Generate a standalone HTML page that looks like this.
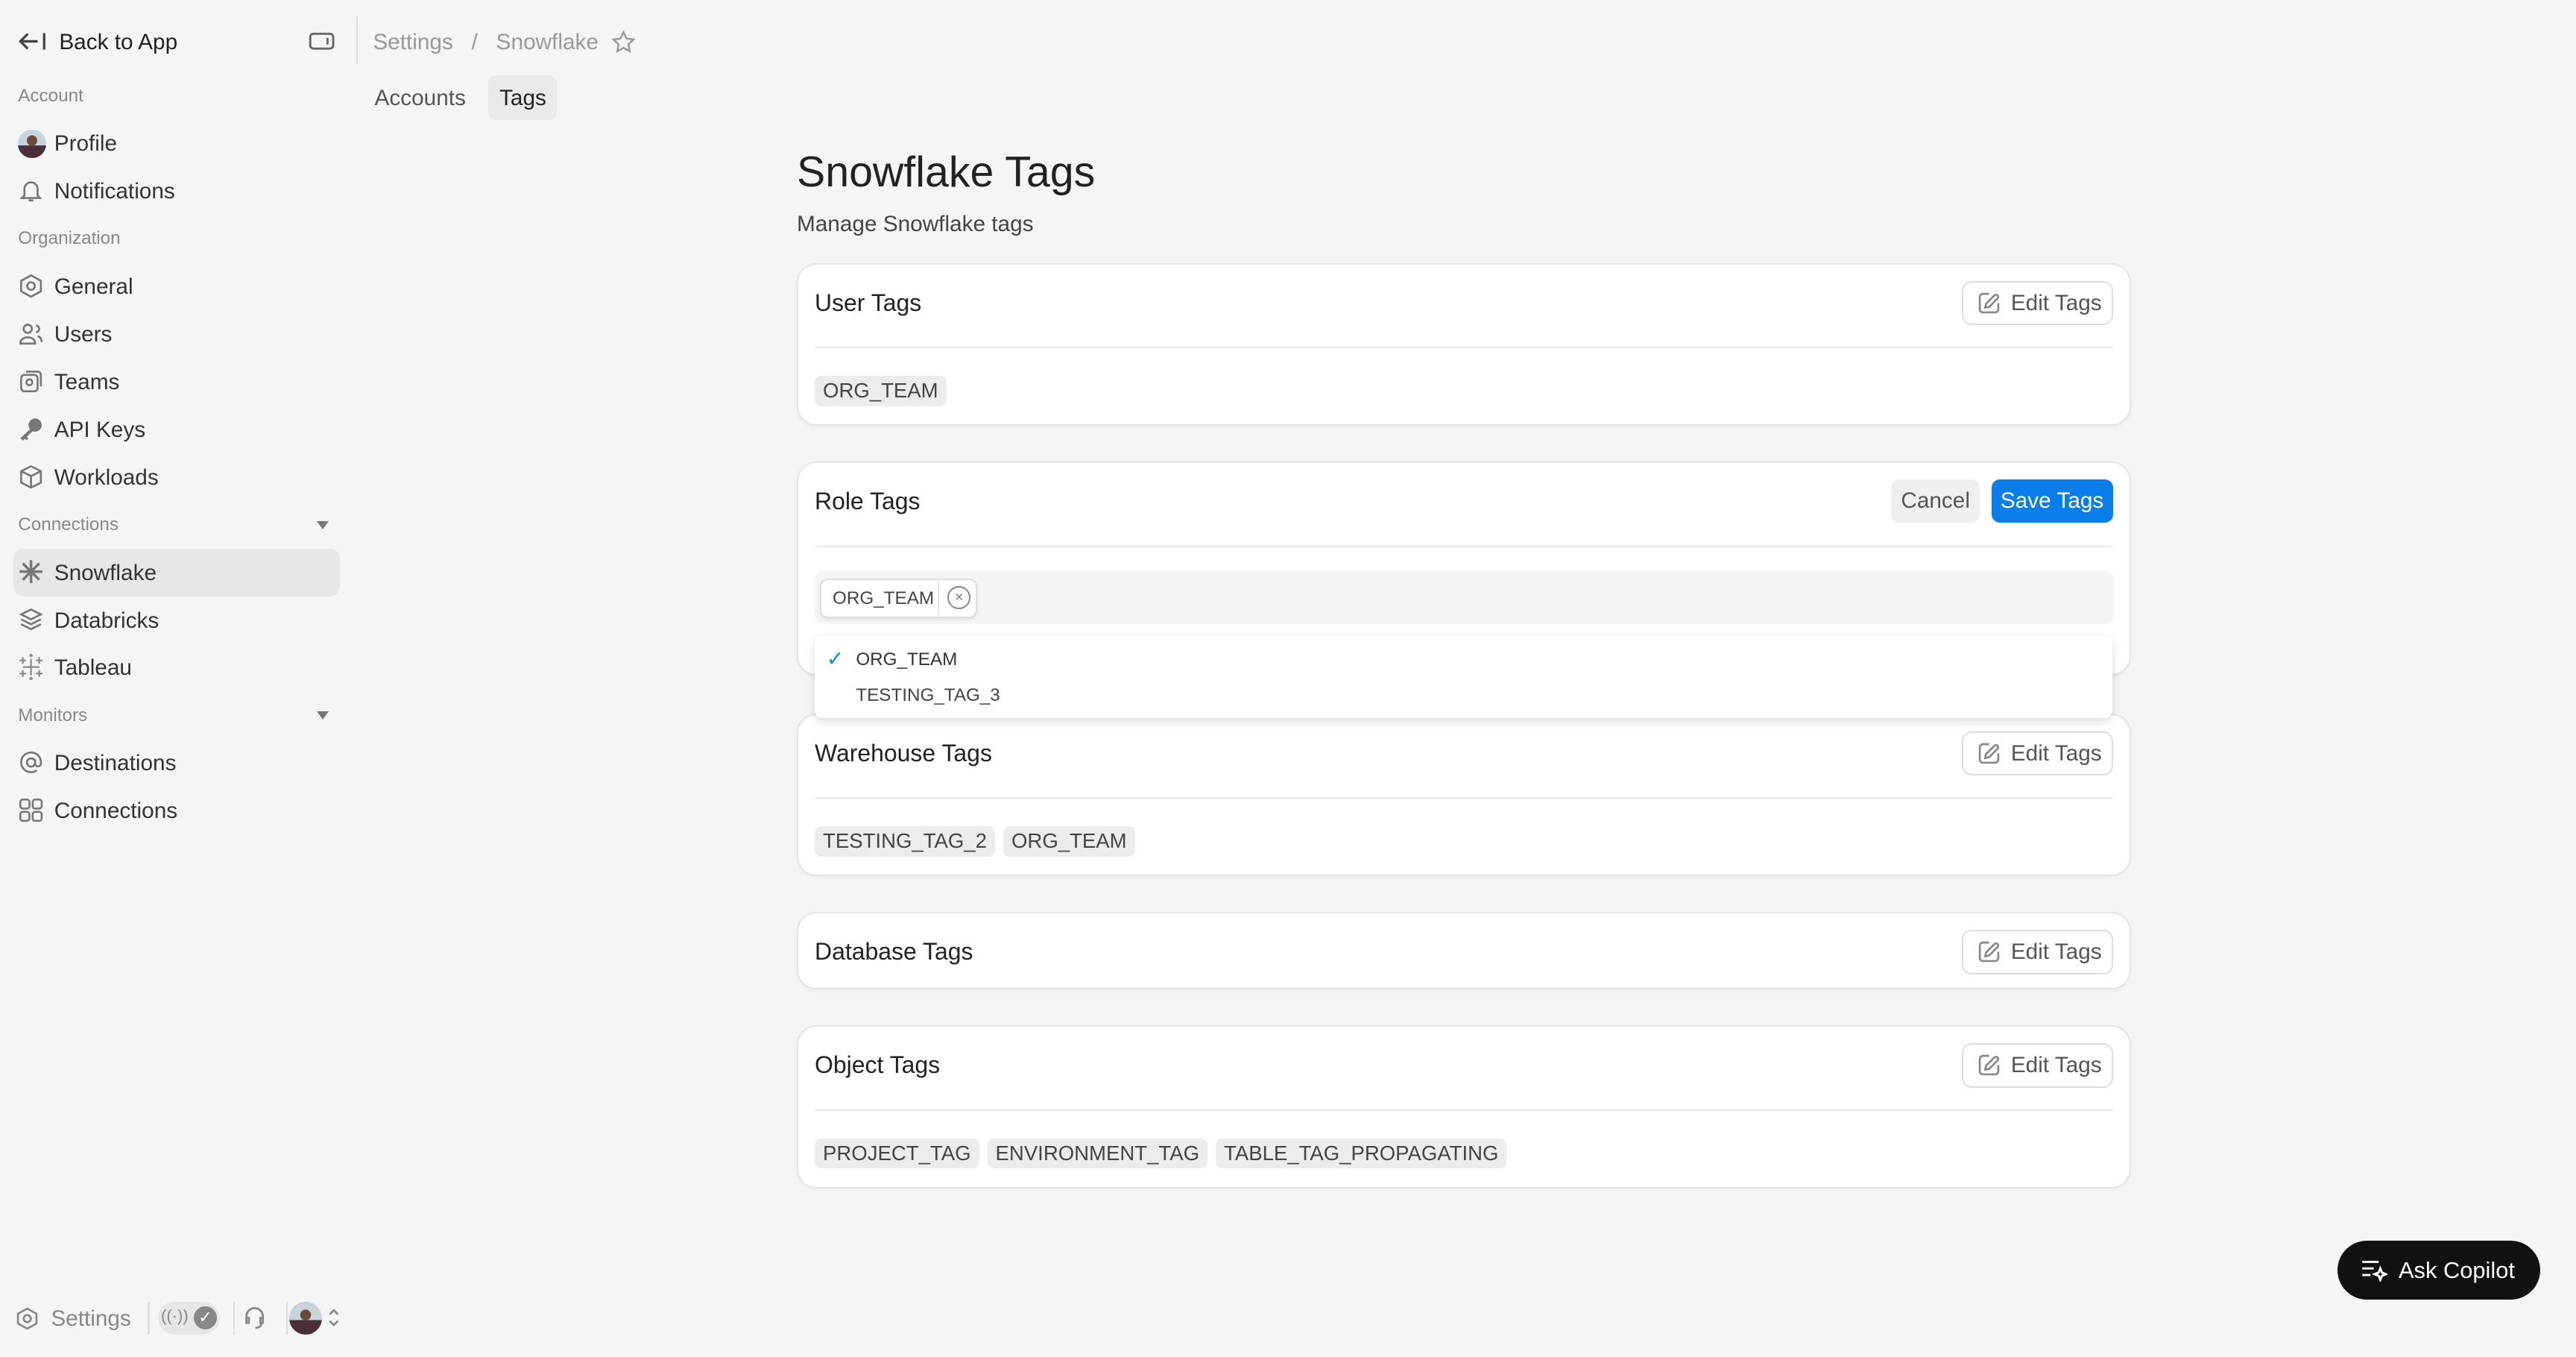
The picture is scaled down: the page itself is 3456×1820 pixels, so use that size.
<!DOCTYPE html>
<html><head><meta charset="utf-8"><style>
*{box-sizing:border-box;margin:0;padding:0}
html,body{width:3456px;height:1820px;overflow:hidden;background:#f4f5f7}
#r{zoom:2.2041;position:relative;width:1568px;height:826px;font-family:"Liberation Sans",sans-serif;color:#222;}
.a{position:absolute;white-space:nowrap}
.nav{font-size:13.5px;color:#333;left:33px}
.sec{font-size:11px;color:#888;left:11px}
.ic{position:absolute;left:11px;width:16px;height:16px}
.card{position:absolute;left:485px;width:812px;background:#fff;border:1px solid #e3e4e8;border-radius:12px;box-shadow:0 1px 2px rgba(0,0,0,.04)}
.card .t{position:absolute;left:10px;top:15px;font-size:14.5px;color:#222}
.card .ln{position:absolute;left:10px;right:10px;top:50px;border-top:1px solid #e5e5ea}
.eb{position:absolute;right:10px;top:10px;height:27px;width:92px;border:1px solid #ddd;border-radius:6px;background:#fff;font-size:13.5px;color:#555;padding:5px 0 0 29px}
.eb svg{position:absolute;left:8px;top:5px}
.chip{display:inline-block;background:#ececec;border-radius:4px;font-size:12.5px;color:#444;padding:2px 5px;margin-right:5px}
.chips{position:absolute;left:10px;top:67px}
</style></head><body><div id="r">
<svg class="a" style="left:11px;top:18px" width="18" height="14" viewBox="0 0 18 14" fill="none" stroke="#444" stroke-width="1.5"><path d="M12 7H2M6 2.5L1.5 7 6 11.5M16 2v10"/></svg>
<div class="a" style="left:36px;top:18px;font-size:13.5px;color:#222">Back to App</div>
<svg class="a" style="left:188px;top:19px" width="16" height="12" viewBox="0 0 16 12" fill="none" stroke="#666" stroke-width="1.3"><rect x="1" y="1.5" width="14" height="9" rx="2"/><path d="M11.5 4v4"/></svg>
<div class="a" style="left:217px;top:10px;width:1px;height:29px;background:#ddd"></div>
<div class="a sec" style="top:52px">Account</div>
<div class="a" style="left:11px;top:79px;width:17px;height:17px;border-radius:50%;background:radial-gradient(circle at 50% 38%,#6b4a3a 0 22%,transparent 24%),linear-gradient(#c9d3dc 55%,#4a2f3a 56%)"></div>
<div class="a nav" style="top:80px">Profile</div>
<svg class="ic" style="top:108px" viewBox="0 0 16 16" fill="none" stroke="#777" stroke-width="1.2"><path d="M4 11V7a4 4 0 018 0v4l1.5 1.5h-11zM6.5 14h3"/></svg>
<div class="a nav" style="top:109px">Notifications</div>
<div class="a sec" style="top:139px">Organization</div>
<svg class="ic" style="top:166px" viewBox="0 0 16 16" fill="none" stroke="#777" stroke-width="1.2"><path d="M8 1.5l6 3.3v6.4l-6 3.3-6-3.3V4.8z"/><circle cx="8" cy="8" r="2.3"/></svg>
<div class="a nav" style="top:167px">General</div>
<svg class="ic" style="top:195px" viewBox="0 0 16 16" fill="none" stroke="#777" stroke-width="1.2"><circle cx="6" cy="5" r="2.5"/><path d="M1.5 14c0-2.5 2-3.8 4.5-3.8s4.5 1.3 4.5 3.8zM11 3a2 2 0 010 4M12 9.5c1.5.3 2.5 1.5 2.5 3.5"/></svg>
<div class="a nav" style="top:196px">Users</div>
<svg class="ic" style="top:224px" viewBox="0 0 16 16" fill="none" stroke="#777" stroke-width="1.2"><rect x="2" y="4" width="10" height="10" rx="2"/><path d="M5 2h7a2 2 0 012 2v7"/><circle cx="7" cy="8.5" r="1.8"/></svg>
<div class="a nav" style="top:225px">Teams</div>
<svg class="ic" style="top:253px" viewBox="0 0 16 16" fill="#777"><circle cx="10.5" cy="5.5" r="4"/><path d="M8 7.5L1.5 13.5l1.5 1.5 1.2-1.2 1 1 1.2-1.2-1-1 3.8-3.6z"/></svg>
<div class="a nav" style="top:254px">API Keys</div>
<svg class="ic" style="top:282px" viewBox="0 0 16 16" fill="none" stroke="#777" stroke-width="1.2"><path d="M8 1.5l6 3v7l-6 3-6-3v-7zM2 4.5l6 3 6-3M8 7.5v7"/></svg>
<div class="a nav" style="top:283px">Workloads</div>
<div class="a sec" style="top:313px">Connections</div>
<div class="a" style="left:193px;top:317px;border:4px solid transparent;border-top:5px solid #777"></div>
<div class="a" style="left:8px;top:334px;width:199px;height:29px;border-radius:6px;background:#e6e7e9"></div>
<svg class="ic" style="top:340px" viewBox="0 0 16 16" fill="none" stroke="#777" stroke-width="1.6"><path d="M8 1v14M1 8h14M3 3l10 10M13 3L3 13"/></svg>
<div class="a nav" style="top:341px">Snowflake</div>
<svg class="ic" style="top:369px" viewBox="0 0 16 16" fill="none" stroke="#777" stroke-width="1.2"><path d="M8 2l6 3-6 3-6-3zM2 8l6 3 6-3M2 11l6 3 6-3"/></svg>
<div class="a nav" style="top:370px">Databricks</div>
<svg class="ic" style="top:398px" viewBox="0 0 16 16" fill="none" stroke="#888" stroke-width="1"><path d="M8 3v10M3 8h10M3 2v4M1 4h4M13 2v4M11 4h4M3 10v4M1 12h4M13 10v4M11 12h4M8 0v2M7 1h2M8 14v2M7 15h2"/></svg>
<div class="a nav" style="top:399px">Tableau</div>
<div class="a sec" style="top:429px">Monitors</div>
<div class="a" style="left:193px;top:433px;border:4px solid transparent;border-top:5px solid #777"></div>
<svg class="ic" style="top:456px" viewBox="0 0 16 16" fill="none" stroke="#777" stroke-width="1.2"><circle cx="8" cy="8" r="2.5"/><path d="M10.5 6v3a1.8 1.8 0 003.5 0V8a6 6 0 10-2.5 4.8"/></svg>
<div class="a nav" style="top:457px">Destinations</div>
<svg class="ic" style="top:485px" viewBox="0 0 16 16" fill="none" stroke="#777" stroke-width="1.2"><rect x="1.5" y="1.5" width="5.5" height="5.5" rx="1.5"/><rect x="9" y="1.5" width="5.5" height="5.5" rx="1.5"/><rect x="1.5" y="9" width="5.5" height="5.5" rx="1.5"/><rect x="9" y="9" width="5.5" height="5.5" rx="1.5"/></svg>
<div class="a nav" style="top:486px">Connections</div>
<svg class="a" style="left:9px;top:795px" width="15" height="15" viewBox="0 0 16 16" fill="none" stroke="#888" stroke-width="1.3"><path d="M8 1.5l6 3.3v6.4l-6 3.3-6-3.3V4.8z"/><circle cx="8" cy="8" r="2.3"/></svg>
<div class="a" style="left:31px;top:795px;font-size:13.5px;color:#888">Settings</div>
<div class="a" style="left:90px;top:792px;width:1px;height:20px;background:#ddd"></div>
<div class="a" style="left:96px;top:792px;width:38px;height:20px;border-radius:10px;background:#e6e6e8"></div>
<div class="a" style="left:98px;top:795px;font-size:10px;color:#888">((·))</div>
<div class="a" style="left:118px;top:795px;width:14px;height:14px;border-radius:50%;background:#888;color:#fff;font-size:10px;text-align:center;line-height:14px">✓</div>
<div class="a" style="left:142px;top:792px;width:1px;height:20px;background:#ddd"></div>
<svg class="a" style="left:147px;top:794px" width="16" height="16" viewBox="0 0 16 16" fill="none" stroke="#888" stroke-width="1.3"><path d="M3 9V7a5 5 0 0110 0v2M3 8h1.5v3H3zM11.5 8H13v3h-1.5zM12 11.5c0 2-2 2.5-3.5 2.5"/></svg>
<div class="a" style="left:174px;top:792px;width:1px;height:20px;background:#ddd"></div>
<div class="a" style="left:176px;top:792px;width:20px;height:20px;border-radius:50%;background:radial-gradient(circle at 50% 40%,#6b4a3a 0 20%,transparent 22%),linear-gradient(#c9d3dc 55%,#4a2f3a 56%)"></div>
<svg class="a" style="left:199px;top:796px" width="8" height="12" viewBox="0 0 8 12" fill="none" stroke="#888" stroke-width="1.2"><path d="M1.5 4L4 1.5 6.5 4M1.5 8L4 10.5 6.5 8"/></svg>
<div class="a" style="left:227px;top:18px;font-size:13.5px;color:#999">Settings &nbsp;&nbsp;/&nbsp;&nbsp; Snowflake</div>
<svg class="a" style="left:372px;top:18px" width="15" height="15" viewBox="0 0 16 16" fill="none" stroke="#999" stroke-width="1.2"><path d="M8 1.5l2 4.2 4.5.6-3.3 3.1.8 4.5L8 11.7l-4 2.2.8-4.5L1.5 6.3 6 5.7z"/></svg>
<div class="a" style="left:228px;top:52px;font-size:13.5px;color:#555">Accounts</div>
<div class="a" style="left:297px;top:46px;width:42px;height:27px;border-radius:5px;background:#e9eaec"></div>
<div class="a" style="left:304px;top:52px;font-size:13.5px;color:#222">Tags</div>
<div class="a" style="left:485px;top:90px;font-size:26px;color:#222">Snowflake Tags</div>
<div class="a" style="left:485px;top:129px;font-size:13.5px;color:#444">Manage Snowflake tags</div>
<div class="card" style="top:160px;height:99px"><div class="t">User Tags</div>
<div class="eb"><svg width="15" height="15" viewBox="0 0 16 16" fill="none" stroke="#888" stroke-width="1.3"><path d="M8 2H4a2 2 0 00-2 2v8a2 2 0 002 2h8a2 2 0 002-2V8M13 2.5l.5.5a1.4 1.4 0 010 2L8 10.5 5.5 11l.5-2.5 5.5-5.5a1.4 1.4 0 012 0z"/></svg>Edit Tags</div>
<div class="ln"></div><div class="chips"><span class="chip">ORG_TEAM</span></div></div>
<div class="card" style="top:281px;height:130px"><div class="t">Role Tags</div>
<div class="a" style="right:91px;top:10px;height:26px;width:54px;border-radius:5px;background:#efefef;font-size:13.5px;color:#555;text-align:center;line-height:26px">Cancel</div>
<div class="a" style="right:10px;top:10px;height:26px;width:74px;border-radius:5px;background:#0a7ee8;font-size:13.5px;color:#fff;text-align:center;line-height:26px">Save Tags</div>
<div class="ln"></div>
<div class="a" style="left:10px;top:65px;width:791px;height:33px;border-radius:6px;background:#f4f4f4"></div>
<div class="a" style="left:13px;top:70px;width:96px;height:24px;border-radius:5px;background:#fff;border:1px solid #ddd;box-shadow:0 1px 2px rgba(0,0,0,.08)"><span class="a" style="left:7px;top:5px;font-size:11px;color:#444">ORG_TEAM</span><span class="a" style="left:71px;top:0;width:1px;height:22px;background:#e5e5e5"></span><span class="a" style="left:77px;top:4px;width:14px;height:14px;border:1px solid #888;border-radius:50%;font-size:9px;color:#777;text-align:center;line-height:12px">×</span></div>
</div>
<div class="card" style="top:434px;height:99px"><div class="t">Warehouse Tags</div>
<div class="eb"><svg width="15" height="15" viewBox="0 0 16 16" fill="none" stroke="#888" stroke-width="1.3"><path d="M8 2H4a2 2 0 00-2 2v8a2 2 0 002 2h8a2 2 0 002-2V8M13 2.5l.5.5a1.4 1.4 0 010 2L8 10.5 5.5 11l.5-2.5 5.5-5.5a1.4 1.4 0 012 0z"/></svg>Edit Tags</div>
<div class="ln"></div><div class="chips"><span class="chip">TESTING_TAG_2</span><span class="chip">ORG_TEAM</span></div></div>
<div class="a" style="left:496px;top:387px;width:790px;height:50px;background:#fff;border-radius:5px;box-shadow:0 2px 6px rgba(0,0,0,.14);z-index:5">
<div class="a" style="left:7px;top:6px;font-size:13px;color:#0a8ee8">✓</div>
<div class="a" style="left:25px;top:8px;font-size:11px;color:#333">ORG_TEAM</div>
<div class="a" style="left:25px;top:30px;font-size:11px;color:#444">TESTING_TAG_3</div></div>
<div class="card" style="top:555px;height:47px"><div class="t">Database Tags</div>
<div class="eb"><svg width="15" height="15" viewBox="0 0 16 16" fill="none" stroke="#888" stroke-width="1.3"><path d="M8 2H4a2 2 0 00-2 2v8a2 2 0 002 2h8a2 2 0 002-2V8M13 2.5l.5.5a1.4 1.4 0 010 2L8 10.5 5.5 11l.5-2.5 5.5-5.5a1.4 1.4 0 012 0z"/></svg>Edit Tags</div></div>
<div class="card" style="top:624px;height:99px"><div class="t">Object Tags</div>
<div class="eb"><svg width="15" height="15" viewBox="0 0 16 16" fill="none" stroke="#888" stroke-width="1.3"><path d="M8 2H4a2 2 0 00-2 2v8a2 2 0 002 2h8a2 2 0 002-2V8M13 2.5l.5.5a1.4 1.4 0 010 2L8 10.5 5.5 11l.5-2.5 5.5-5.5a1.4 1.4 0 012 0z"/></svg>Edit Tags</div>
<div class="ln"></div><div class="chips"><span class="chip">PROJECT_TAG</span><span class="chip">ENVIRONMENT_TAG</span><span class="chip">TABLE_TAG_PROPAGATING</span></div></div>
<div class="a" style="left:1423px;top:755px;width:123px;height:36px;border-radius:18px;background:#111;color:#fff;font-size:14px;padding:10px 0 0 37px">Ask Copilot</div>
<svg class="a" style="left:1437px;top:766px" width="16" height="14" viewBox="0 0 16 14" fill="none" stroke="#fff" stroke-width="1.3"><path d="M1 2h10M1 6h7M1 10h5M12 6l1 2.5 2.5 1-2.5 1-1 2.5-1-2.5-2.5-1 2.5-1z"/></svg>
</div></body></html>
